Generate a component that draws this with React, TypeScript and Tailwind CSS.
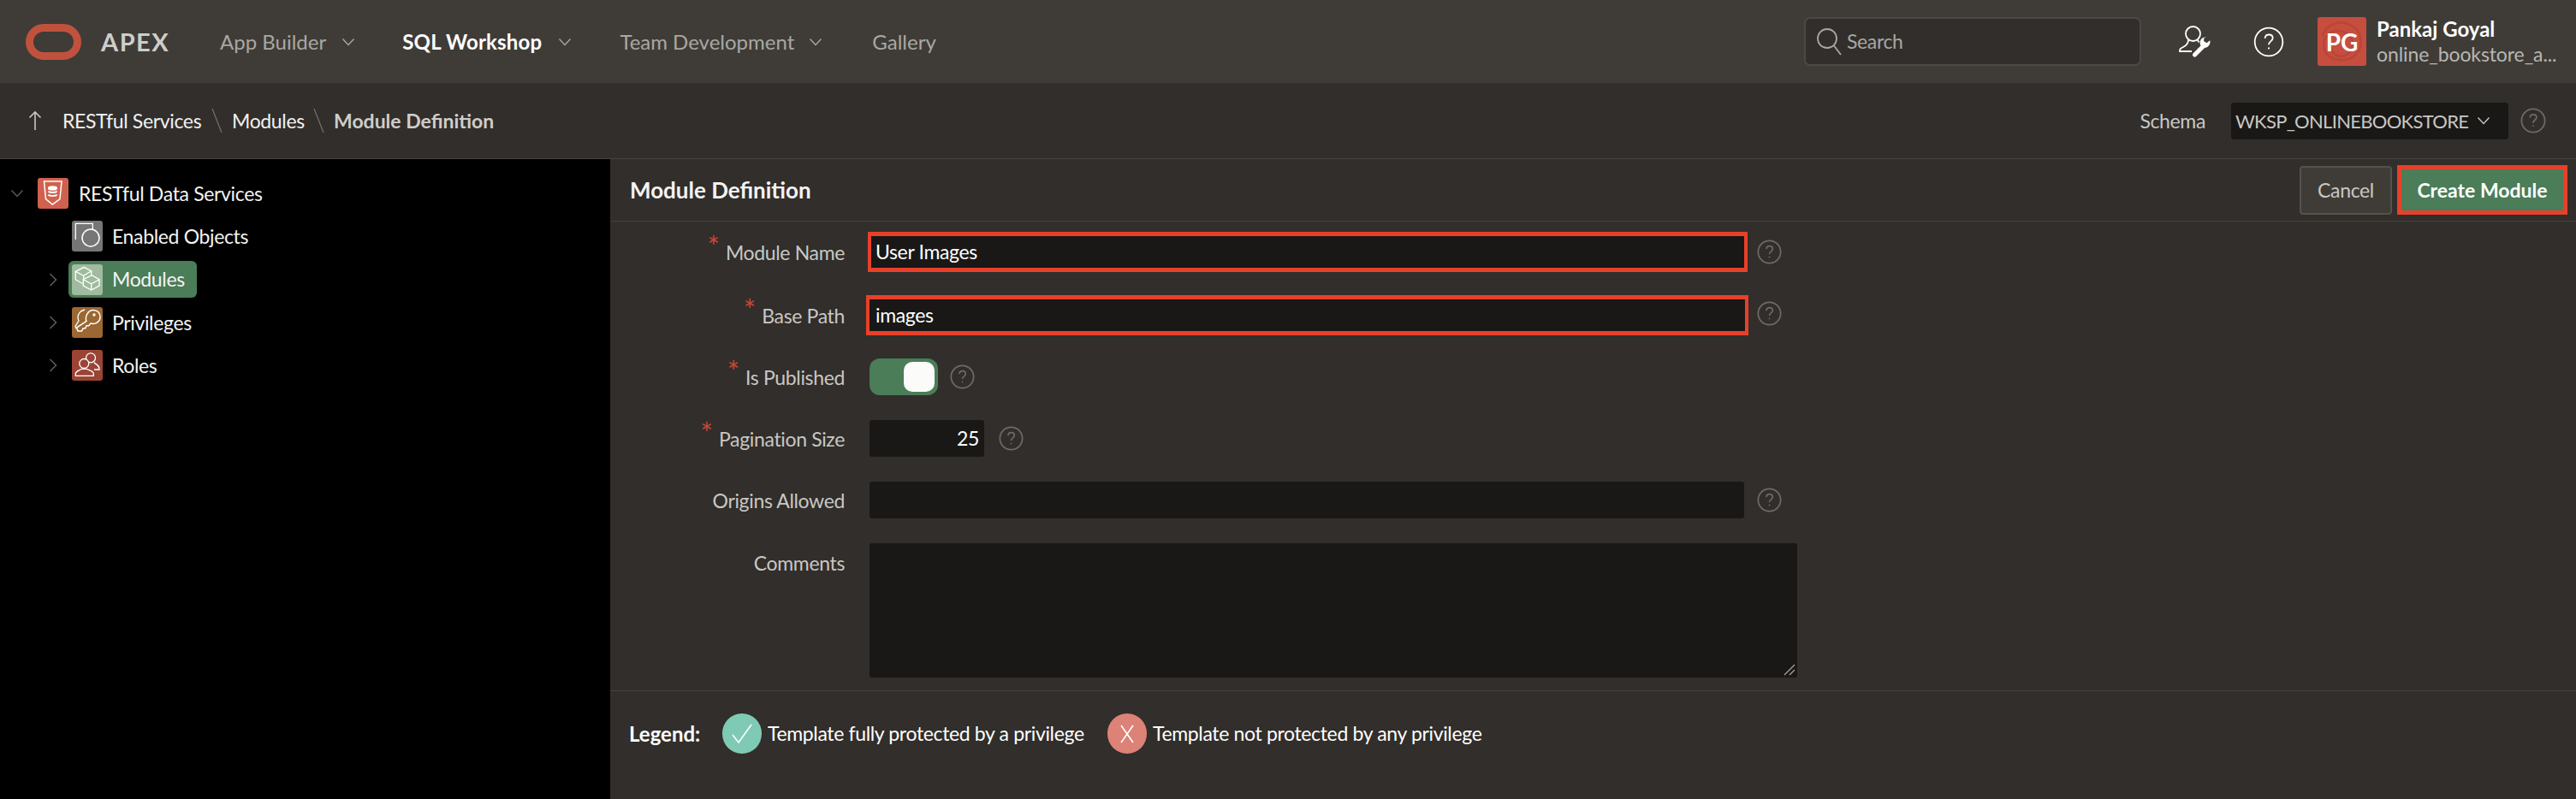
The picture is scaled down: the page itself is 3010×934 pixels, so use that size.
import React from "react";

const font = { fontFamily: '"Lato", "Open Sans", sans-serif' };
const T = "text-[23px] tracking-[-0.35px]";

function Chevron({ className = "" }: { className?: string }) {
  return (
    <svg viewBox="0 0 16 10" className={className} fill="none" stroke="currentColor" strokeWidth="1.4">
      <path d="M1.5 1.5 8 8.5l6.500-7" />
    </svg>
  );
}

function ChevronRight() {
  return (
    <svg viewBox="0 0 10 16" className="w-[10px] h-[16px] text-[#5c5a57]" fill="none" stroke="currentColor" strokeWidth="1.6">
      <path d="M1.5 1 8.5 8l-7 7" />
    </svg>
  );
}

function Help({ className = "", dim = true }: { className?: string; dim?: boolean }) {
  return (
    <svg viewBox="0 0 30 30" className={className} fill="none" stroke={dim ? "#6d6a67" : "#ffffff"} strokeWidth={dim ? 1.8 : 1.5}>
      <circle cx="15" cy="15" r="13.6" />
      <path d="M11.3 11.5c.2-2.3 1.8-3.6 3.8-3.6 2.2 0 3.8 1.4 3.8 3.4 0 2.9-3.9 3.1-3.9 6.4" />
      <circle cx="15" cy="21.2" r="0.9" fill={dim ? "#6d6a67" : "#ffffff"} stroke="none" />
    </svg>
  );
}

function TreeIcon({ bg, children }: { bg: string; children: React.ReactNode }) {
  return (
    <span className={`flex items-center justify-center w-[36px] h-[36px] rounded-[3px] shrink-0 ${bg}`}>
      <svg viewBox="0 0 36 36" className="w-[36px] h-[36px]" fill="none" stroke="#ffffff" strokeWidth="1.3">
        {children}
      </svg>
    </span>
  );
}

function TreeRow({ arrow, icon, label, active }: { arrow?: boolean; icon: React.ReactNode; label: string; active?: boolean }) {
  return (
    <div className={`flex items-center ${active ? "h-[51px]" : "h-[50px]"}`}>
      <span className="w-[67px] shrink-0 flex justify-end">
        {arrow ? <ChevronRight /> : null}
      </span>
      <span className={`flex items-center h-[43px] ml-[13px] pl-[4px] pr-[14px] rounded-[6px] ${active ? "bg-[#4a7d58]" : ""}`}>
        {icon}
        <span className={`ml-[11px] text-[#f4f3f2] ${T}`}>{label}</span>
      </span>
    </div>
  );
}

function Label({ text, req, top = false }: { text: string; req?: boolean; top?: boolean }) {
  return (
    <div className={`w-[274px] shrink-0 flex justify-end text-[#c9c7c4] leading-[30px] ${T} ${top ? "self-start mt-[8px]" : ""}`}>
      {req ? <span className="text-[#c74634] text-[34px] leading-[26px] tracking-normal mr-[7px] -mt-[5px]">*</span> : null}
      <span>{text}</span>
    </div>
  );
}

export default function App() {
  return (
    <div className="w-[3010px] h-[934px] bg-[#312e2b] flex flex-col overflow-hidden" style={font}>
      {/* top bar */}
      <header className="h-[97px] bg-[#3f3c37] flex items-center shrink-0">
        <svg viewBox="0 0 65 42" className="w-[65px] h-[42px] ml-[30px]" fill="none" stroke="#c0523d" strokeWidth="9">
          <rect x="4.5" y="4.5" width="56" height="33" rx="16.5" />
        </svg>
        <span className="ml-[23px] w-[81px] text-[29px] font-bold tracking-[1.5px] text-[#cfcdca] whitespace-nowrap">APEX</span>
        <nav className="flex items-center ml-[58px] text-[24px]">
          <span className="text-[#a9a7a3]">App Builder</span>
          <Chevron className="w-[16px] h-[10px] ml-[18px] text-[#a9a7a3]" />
          <span className="ml-[55px] text-white font-bold tracking-[0.2px]">SQL Workshop</span>
          <Chevron className="w-[16px] h-[10px] ml-[19px] text-[#a9a7a3]" />
          <span className="ml-[56px] text-[#a9a7a3]">Team Development</span>
          <Chevron className="w-[16px] h-[10px] ml-[17px] text-[#a9a7a3]" />
          <span className="ml-[58px] text-[#a9a7a3]">Gallery</span>
        </nav>
        <div className="ml-auto flex items-center">
          <div className="w-[394px] h-[57px] rounded-[7px] bg-[#312e2b] border-[2px] border-[#4c4945] flex items-center pl-[12px]">
            <svg viewBox="0 0 30 36" className="w-[30px] h-[36px]" fill="none" stroke="#a9a7a3" strokeWidth="1.8">
              <circle cx="13" cy="14" r="11" />
              <path d="M21 22.5 29 33" />
            </svg>
            <span className={`ml-[6px] text-[#a9a7a3] ${T}`}>Search</span>
          </div>
          <svg viewBox="0 0 37 37" className="w-[37px] h-[37px] ml-[44px]" fill="none" stroke="#ffffff" strokeWidth="1.8">
            <ellipse cx="16.500" cy="9.500" rx="8.500" ry="8.500" />
            <path d="M11 16.500c0 4-2 6.500-6 8.500-3 1.500-4 2-4 5h14" />
            <path d="M22 16.500c.3 1 .8 2 1.500 3" />
            <path d="M18.500 34 28.500 24" strokeWidth="5" strokeLinecap="round" />
            <path d="M31 13.500c-4 0-7 3.500-6.300 7.500.3 2 1.500 3.500 2.800 4.300 4.500 2 9-1.800 9-6.300 0-.8 0-1.300-.3-1.800l-3.700 3-3.500-2.200 .5-3.700 3-.8c-.5 0-1 0-1.500 0z" fill="#ffffff" stroke="none" />
          </svg>
          <Help dim={false} className="w-[36px] h-[36px] ml-[50px]" />
          <div className="relative overflow-hidden w-[57px] h-[57px] ml-[39px] bg-[#c74e3f] rounded-[3px] flex items-center justify-center text-white font-bold text-[28px]">
            <svg viewBox="0 0 57 57" className="absolute inset-0 w-[57px] h-[57px]" fill="none" stroke="#b84636" strokeWidth="2.500">
              <path d="M6 22c4-14 20-20 34-12s14 28 2 36-30 4-34-8 6-24 18-22 20 14 12 24-20 6-22-4" />
            </svg>
            <span className="relative">PG</span>
          </div>
          <div className="ml-[12px] w-[233px] flex flex-col">
            <span className="text-white font-bold text-[24px] leading-[30px]">Pankaj Goyal</span>
            <span className="text-[#b8b6b2] text-[23px] tracking-[-0.1px] leading-[29px] whitespace-nowrap">online_bookstore_a...</span>
          </div>
        </div>
      </header>

      {/* breadcrumb bar */}
      <div className="h-[89px] shrink-0 border-b-[1px] border-[#46433f] flex items-center">
        <svg viewBox="0 0 16 24" className="w-[16px] h-[24px] ml-[33px]" fill="none" stroke="#c9c7c4" strokeWidth="1.6">
          <path d="M8 23V2M1.5 8.500 8 2l6.500 6.500" />
        </svg>
        <span className={`ml-[24px] w-[163px] whitespace-nowrap text-[#f2f1ef] ${T}`}>RESTful Services</span>
        <svg viewBox="0 0 13 28" className="w-[13px] h-[28px] ml-[11px]" stroke="#77746f" strokeWidth="1.2"><path d="M1 0l11 28" /></svg>
        <span className={`ml-[11px] w-[84px] whitespace-nowrap text-[#f2f1ef] ${T}`}>Modules</span>
        <svg viewBox="0 0 13 28" className="w-[13px] h-[28px] ml-[11px]" stroke="#77746f" strokeWidth="1.2"><path d="M1 0l11 28" /></svg>
        <span className="ml-[11px] text-[23px] font-bold text-[#cfcdca]">Module Definition</span>
        <div className="ml-auto flex items-center">
          <span className={`text-[#c9c7c4] ${T}`}>Schema</span>
          <div className="ml-[30px] w-[324px] h-[43px] rounded-[4px] bg-[#191816] flex items-center pl-[5px]">
            <span className="text-[22px] tracking-[-0.7px] text-[#c9c7c4] w-[272px] whitespace-nowrap">WKSP_ONLINEBOOKSTORE</span>
            <Chevron className="w-[16px] h-[10px] ml-[10px] text-[#c9c7c4]" />
          </div>
          <Help className="w-[30px] h-[30px] ml-[14px] mr-[35px]" />
        </div>
      </div>

      {/* body */}
      <div className="flex-1 flex min-h-0">
        <aside className="w-[713px] shrink-0 bg-black pt-[15px]">
          <div className="flex items-center h-[50px]">
            <span className="w-[44px] shrink-0 pl-[12px]">
              <Chevron className="w-[16px] h-[10px] text-[#5c5a57]" />
            </span>
            <TreeIcon bg="bg-[#cf614e]">
              <path d="M7.500 4h20.500l-2 20.500-8.700 6.500L9.500 24.500z" strokeWidth="1.500" />
              <ellipse cx="17.500" cy="12" rx="5" ry="2" fill="#fff" />
              <path d="M12.500 15.500c1 2 9 2 10 0M12.500 19.500c1 2 9 2 10 0" strokeWidth="1.800" />
            </TreeIcon>
            <span className={`ml-[12px] text-[#f4f3f2] ${T}`}>RESTful Data Services</span>
          </div>
          <TreeRow
            icon={
              <TreeIcon bg="bg-[#767676]">
                <path d="M4.300 22V3.300h20v7" />
                <circle cx="22" cy="20" r="10" strokeWidth="1.500" />
              </TreeIcon>
            }
            label="Enabled Objects"
          />
          <TreeRow
            arrow
            active
            icon={
              <TreeIcon bg="bg-[#a0bb9e]">
                <path d="M4.300 8.300 14 3.300l8.700 4.400-9 5.600zM4.300 8.300v9.400l8.400 5M13.700 13.300v4.400M22.700 7.700v5" />
                <path d="M13.300 17.700 23.300 12.700 32 17.700l-9.300 5zM13.300 17.700V25l9.400 5 9.300-5v-7.300M22.700 22.700V30" />
              </TreeIcon>
            }
            label="Modules"
          />
          <TreeRow
            arrow
            icon={
              <TreeIcon bg="bg-[#9b6732]">
                <path d="M17 16.500c-2-5 1.500-13 8-13 5 0 8 3.500 8 8 0 6-6 9-11 7.500l-2.500 3-2.500-.5-1 3-3 .5-1.500 3H7l-1.500-4z" strokeWidth="1.500" />
                <circle cx="26" cy="9" r="1" fill="#fff" />
                <path d="M15 3c-5 1-8 5-8 9 0 2 .5 3 1 4l-4 6.500 1.500 3" />
              </TreeIcon>
            }
            label="Privileges"
          />
          <TreeRow
            arrow
            icon={
              <TreeIcon bg="bg-[#9a4436]">
                <circle cx="22" cy="9.300" r="5.500" />
                <path d="M26 14.500c.5 2 6 3 6 7v1.500h-6" />
                <circle cx="14.300" cy="16" r="5.500" fill="#9a4436" />
                <path d="M4.300 30.300v-2.500c0-3 4-3.500 7-5.500h6c3 2 8 2.500 8 5.500v2.500z" fill="#9a4436" />
              </TreeIcon>
            }
            label="Roles"
          />
        </aside>

        <main className="flex-1 flex flex-col min-w-0">
          <div className="h-[73px] shrink-0 border-b-[1px] border-[#46433f] flex items-center pl-[23px] pr-[10px]">
            <h1 className="text-[26px] font-bold text-[#f4f3f2]">Module Definition</h1>
            <div className="ml-auto flex items-center">
              <div className={`w-[108px] h-[57px] rounded-[4px] bg-[#3f3c37] border-[2px] border-[#55524d] flex items-center justify-center text-[#c9c7c4] ${T}`}>Cancel</div>
              <div className="ml-[6px] w-[199px] h-[58px] bg-[#4a7d58] border-[5px] border-[#e8402a] flex items-center justify-center text-[23px] font-bold text-white">Create Module</div>
            </div>
          </div>

          <div className="flex flex-col pt-[12px]">
            <div className="flex items-center h-[47px]">
              <Label text="Module Name" req />
              <div className={`ml-[27px] w-[1028px] h-[47px] bg-[#191816] border-x-[4px] border-y-[5px] border-[#e8402a] flex items-center pl-[5px] text-white ${T}`}>User Images</div>
              <Help className="w-[29px] h-[29px] ml-[11px]" />
            </div>
            <div className="flex items-center h-[47px] mt-[27px]">
              <Label text="Base Path" req />
              <div className={`ml-[25px] w-[1031px] h-[47px] bg-[#191816] border-x-[4px] border-y-[5px] border-[#e8402a] flex items-center pl-[7px] text-white ${T}`}>images</div>
              <Help className="w-[29px] h-[29px] ml-[10px] mb-[5px]" />
            </div>
            <div className="flex items-center h-[43px] mt-[27px]">
              <Label text="Is Published" req />
              <div className="ml-[29px] w-[80px] h-[43px] rounded-[12px] bg-[#4a7d58] flex items-center justify-end pr-[4px]">
                <span className="block w-[36px] h-[35px] rounded-[10px] bg-[#fbfbfa]" />
              </div>
              <Help className="w-[29px] h-[29px] ml-[14px]" />
            </div>
            <div className="flex items-center h-[43px] mt-[29px]">
              <Label text="Pagination Size" req />
              <div className={`ml-[29px] w-[134px] h-[43px] rounded-[3px] bg-[#191816] flex items-center justify-end pr-[6px] text-white ${T}`}>25</div>
              <Help className="w-[29px] h-[29px] ml-[17px]" />
            </div>
            <div className="flex items-center h-[43px] mt-[29px]">
              <Label text="Origins Allowed" />
              <div className="ml-[29px] w-[1022px] h-[43px] rounded-[3px] bg-[#191816]" />
              <Help className="w-[29px] h-[29px] ml-[15px]" />
            </div>
            <div className="flex items-start mt-[29px]">
              <Label text="Comments" top />
              <div className="ml-[29px] w-[1084px] h-[157px] rounded-[3px] bg-[#191816] flex items-end justify-end p-[2px]">
                <svg viewBox="0 0 14 14" className="w-[14px] h-[14px]" stroke="#a9a7a3" strokeWidth="1.200"><path d="M1 13 13 1M7 13l6-6" /></svg>
              </div>
            </div>
          </div>

          <div className="mt-[15px] border-t-[1px] border-[#46433f] flex items-center h-[100px] pl-[22px]">
            <span className="text-[24px] font-bold text-white w-[109px]">Legend:</span>
            <span className="w-[46px] h-[47px] rounded-full bg-[#7fcab5] flex items-center justify-center">
              <svg viewBox="0 0 26 26" className="w-[26px] h-[26px]" fill="none" stroke="#ffffff" strokeWidth="1.6"><path d="M2 14l7 9L24 2" /></svg>
            </span>
            <span className={`ml-[7px] w-[370px] whitespace-nowrap text-white ${T}`}>Template fully protected by a privilege</span>
            <span className="ml-[27px] w-[46px] h-[47px] rounded-full bg-[#dc8277] flex items-center justify-center">
              <svg viewBox="0 0 24 24" className="w-[24px] h-[24px]" fill="none" stroke="#ffffff" strokeWidth="1.6"><path d="M5 2l14 20M19 2 5 22" /></svg>
            </span>
            <span className={`ml-[7px] text-white ${T}`}>Template not protected by any privilege</span>
          </div>
        </main>
      </div>
    </div>
  );
}
